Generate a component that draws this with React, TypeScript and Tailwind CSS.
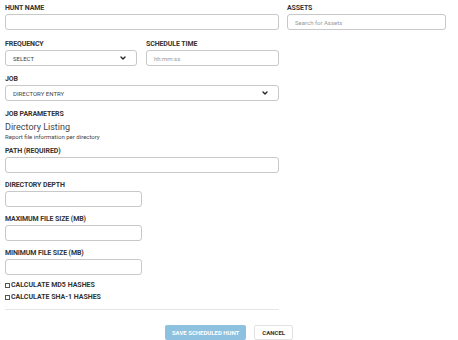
import { ChevronDown } from 'lucide-react'

const font = { fontFamily: 'Roboto, "Liberation Sans", sans-serif' }

function Label({ children, className = '' }: { children: React.ReactNode; className?: string }) {
  return (
    <div className={`text-[7px] leading-[8px] font-bold text-[#333] uppercase tracking-[-0.1px] mb-[2px] ${className}`}>
      {children}
    </div>
  )
}

function Box({ w = 'w-full', children }: { w?: string; children?: React.ReactNode }) {
  return (
    <div className={`${w} h-[16px] border border-[#c8c8c8] rounded-[3px] bg-white flex items-center px-[7px] text-[6px] text-[#444]`}>
      {children}
    </div>
  )
}

function SelectBox({ w, value }: { w?: string; value: string }) {
  return (
    <Box w={w}>
      <span className="flex-1">{value}</span>
      <ChevronDown size={8} strokeWidth={4} className="text-[#222] mr-[2px]" />
    </Box>
  )
}

export default function App() {
  return (
    <div className="w-[458px] h-[340px] bg-white overflow-hidden relative" style={font}>
      <div className="flex pl-[5px] pt-[4px]">
        {/* left column */}
        <div className="w-[274px]">
          <Label>Hunt Name</Label>
          <Box />

          <div className="flex gap-[9px] mt-[10px]">
            <div className="w-[132px]">
              <Label>Frequency</Label>
              <SelectBox value="SELECT" />
            </div>
            <div className="flex-1">
              <Label>Schedule Time</Label>
              <Box><span className="text-[#999]">hh:mm:ss</span></Box>
            </div>
          </div>

          <Label className="mt-[9px]">Job</Label>
          <SelectBox value="DIRECTORY ENTRY" />

          <Label className="mt-[9px]">Job Parameters</Label>
          <div className="text-[9px] leading-[10px] text-[#444] mt-[4px]">Directory Listing</div>
          <div className="text-[6px] leading-[8px] text-[#444] mt-[1px]">Report file information per directory</div>

          <Label className="mt-[6px]">Path (Required)</Label>
          <Box />

          <Label className="mt-[8px]">Directory Depth</Label>
          <Box w="w-[137px]" />

          <Label className="mt-[8px]">Maximum File Size (MB)</Label>
          <Box w="w-[137px]" />

          <Label className="mt-[8px]">Minimum File Size (MB)</Label>
          <Box w="w-[137px]" />

          <div className="mt-[6px] flex flex-col gap-[4px]">
            {['Calculate MD5 Hashes', 'Calculate SHA-1 Hashes'].map((t) => (
              <div key={t} className="flex items-center gap-[1px] text-[7px] leading-[8px] font-bold text-[#333] uppercase">
                <span className="w-[5px] h-[5px] border border-[#555] inline-block" />
                {t}
              </div>
            ))}
          </div>

          <div className="h-px bg-[#e6e6e6] mt-[8px]" />
        </div>

        {/* right column */}
        <div className="w-[159px] ml-[8px]">
          <Label>Assets</Label>
          <Box w="w-full">
            <span className="text-[#999]">Search for Assets</span>
          </Box>
        </div>
      </div>

      <div className="flex justify-center gap-[8px] mt-[15px]">
        <button className="h-[15px] px-[7px] bg-[#8ec0df] text-white text-[6px] font-bold uppercase rounded-[2px]">
          Save Scheduled Hunt
        </button>
        <button className="h-[15px] px-[7px] bg-white text-[#333] text-[6px] font-bold uppercase border border-[#e2e2e2] rounded-[2px]">
          Cancel
        </button>
      </div>
    </div>
  )
}
